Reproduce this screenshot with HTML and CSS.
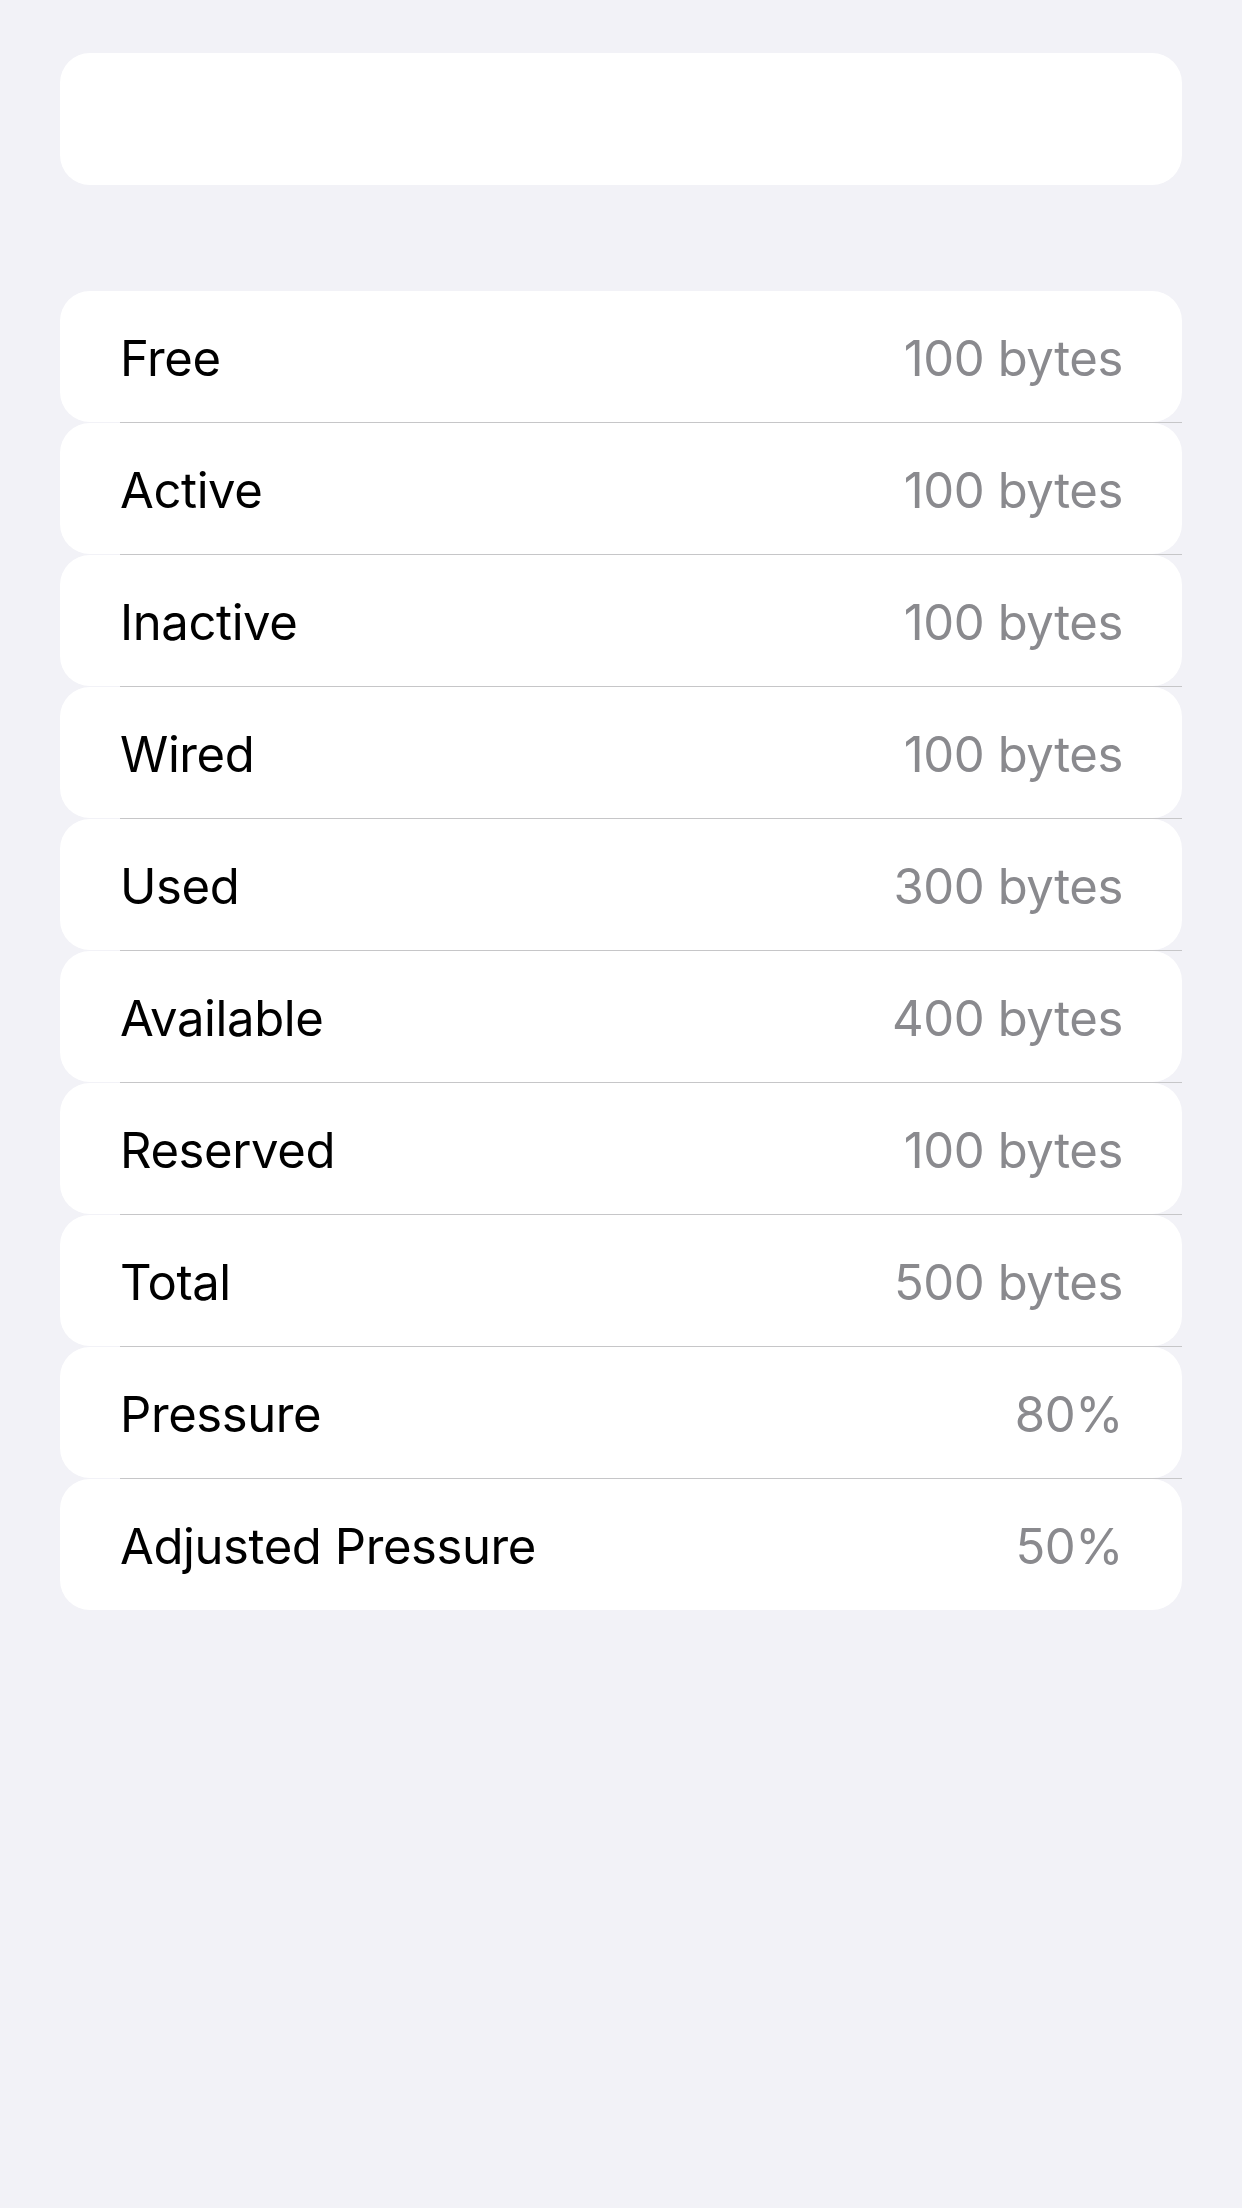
FILE: index.html
```html
<!DOCTYPE html>
<html>
<head>
<meta charset="utf-8">
<link rel="stylesheet" href="styles.css">
</head>
<body>
<div class="page">
  <div class="card top-card"></div>
  <div class="list">
    <div class="row"><span class="label">Free</span><span class="value">100 bytes</span></div>
    <div class="sep"></div>
    <div class="row"><span class="label">Active</span><span class="value">100 bytes</span></div>
    <div class="sep"></div>
    <div class="row"><span class="label">Inactive</span><span class="value">100 bytes</span></div>
    <div class="sep"></div>
    <div class="row"><span class="label">Wired</span><span class="value">100 bytes</span></div>
    <div class="sep"></div>
    <div class="row"><span class="label">Used</span><span class="value">300 bytes</span></div>
    <div class="sep"></div>
    <div class="row"><span class="label">Available</span><span class="value">400 bytes</span></div>
    <div class="sep"></div>
    <div class="row"><span class="label">Reserved</span><span class="value">100 bytes</span></div>
    <div class="sep"></div>
    <div class="row"><span class="label">Total</span><span class="value">500 bytes</span></div>
    <div class="sep"></div>
    <div class="row"><span class="label">Pressure</span><span class="value">80%</span></div>
    <div class="sep"></div>
    <div class="row"><span class="label">Adjusted Pressure</span><span class="value">50%</span></div>
  </div>
</div>
</body>
</html>
```
FILE: styles.css
```css
html, body {
  margin: 0;
  padding: 0;
  background: #f2f2f7;
}
body {
  width: 1242px;
  min-height: 2208px;
  font-family: Inter, "Noto Sans", sans-serif;
}
.page {
  padding: 53px 60px 0 60px;
  display: flex;
  flex-direction: column;
}
.card {
  background: #ffffff;
  border-radius: 30px;
}
.top-card {
  height: 132px;
}
.list {
  margin-top: 106px;
  display: flex;
  flex-direction: column;
}
.row {
  height: 131px;
  box-sizing: border-box;
  background: #ffffff;
  border-radius: 30px;
  display: flex;
  align-items: center;
  justify-content: space-between;
  padding: 3px 59px 0 60px;
  font-size: 49px;
  letter-spacing: -0.4px;
}
.label {
  color: #000000;
}
.value {
  color: #8a8a8e;
}
.sep {
  height: 1px;
  margin-left: 60px;
  background: #c6c6c8;
}
```
